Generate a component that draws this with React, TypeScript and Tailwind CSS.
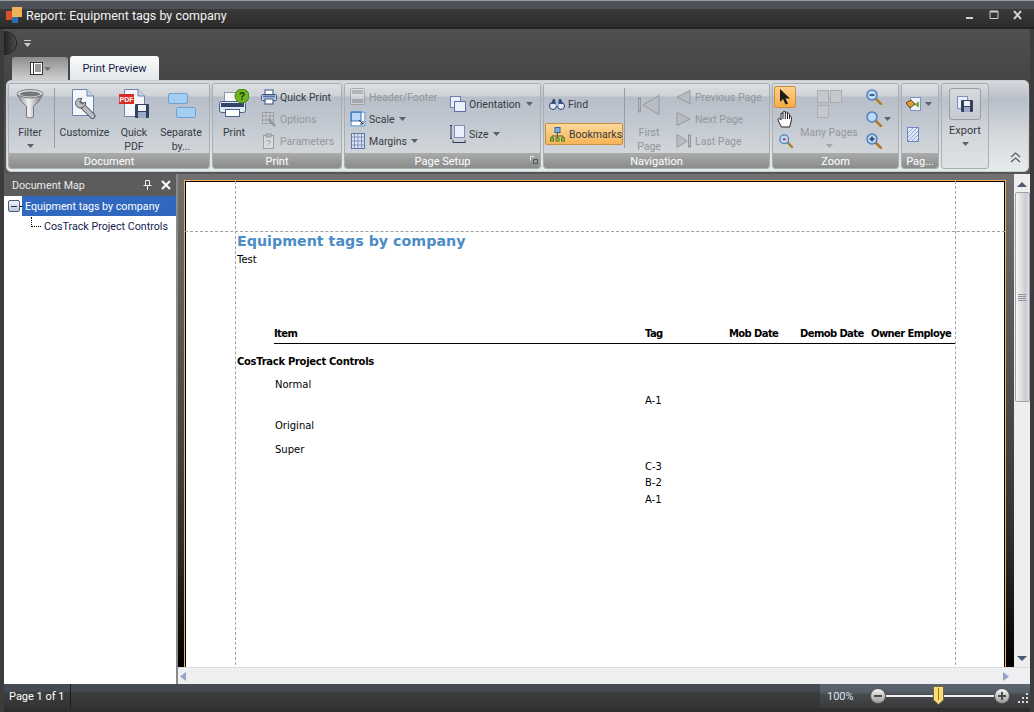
import React from "react";

const ui = "font-['Roboto','Noto_Sans',sans-serif]";
const dim = "text-[#94979b]";
const dark = "text-[#363b42]";

const Arrow = ({ color = "#5c6068" }: { color?: string }) => (
  <svg width="7" height="4" viewBox="0 0 7 4" className="shrink-0">
    <path d="M0 0h7L3.5 4z" fill={color} />
  </svg>
);

const Funnel = () => (
  <svg width="28" height="30" viewBox="0 0 28 30">
    <defs>
      <linearGradient id="fn" x1="0" x2="1" y1="0" y2="0">
        <stop offset="0" stopColor="#8d8f92" />
        <stop offset="0.45" stopColor="#f2f2f2" />
        <stop offset="1" stopColor="#77797c" />
      </linearGradient>
    </defs>
    <ellipse cx="14" cy="5" rx="13" ry="4.5" fill="#d8dadc" stroke="#7f8184" />
    <ellipse cx="14" cy="5" rx="10" ry="2.5" fill="#74777a" />
    <path d="M1.5 6Q5 14 10.5 17V28Q14 30 17.500 28V17Q23 14 26.500 6Q14 12 1.500 6Z" fill="url(#fn)" stroke="#77797c" />
  </svg>
);

const Doc = ({ x = 0, y = 0, w = 20, h = 27 }: { x?: number; y?: number; w?: number; h?: number }) => (
  <g transform={`translate(${x} ${y})`}>
    <path d={`M.5 .5H${w - 7}L${w - 0.5} 7V${h - 0.5}H.5Z`} fill="#f3f6fb" stroke="#6e82ac" />
    <path d={`M${w - 7} .5V7H${w - 0.5}`} fill="#c9d4e8" stroke="#6e82ac" />
  </g>
);

const Customize = () => (
  <svg width="25" height="30" viewBox="0 0 25 30">
    <Doc w={22} h={27} />
    <path d="M9 15.500L20.500 27" stroke="#50545a" strokeWidth="6" strokeLinecap="round" />
    <path d="M9 15.500L20.500 27" stroke="#b9bcc2" strokeWidth="4" strokeLinecap="round" />
    <path d="M10 9.500a5 5 0 0 0-6.500 4c-.3 3 2 6 5.500 5.500 3-.5 5-3 4.500-6l-3 2-3-2z" fill="#b9bcc2" stroke="#50545a" />
  </svg>
);

const Floppy = ({ x, y, s = 13 }: { x: number; y: number; s?: number }) => (
  <g transform={`translate(${x} ${y})`}>
    <rect width={s} height={s} rx="1" fill="#32415f" />
    <rect x="3" y="1" width={s - 6} height={s / 2 - 1} fill="#eef1f6" />
    <rect x="3" y={s / 2 + 1} width={s - 6} height={s / 2 - 1} fill="#9aa9c4" />
  </g>
);

const QuickPdf = () => (
  <svg width="30" height="31" viewBox="0 0 30 31">
    <Doc x={5} w={21} h={28} />
    <rect x="0" y="5" width="15" height="10" fill="#d82a22" />
    <text x="7.500" y="12.500" textAnchor="middle" fontSize="7" fontWeight="700" fill="#fff" fontFamily="'Liberation Sans',sans-serif">PDF</text>
    <Floppy x={16} y={15} s={14} />
  </svg>
);

const Separate = () => (
  <svg width="28" height="26" viewBox="0 0 28 26" className="mt-[4px] ml-[2px]">
    <rect x=".5" y=".5" width="19" height="10" rx="1.500" fill="#a5cdf0" stroke="#6ba3d4" />
    <rect x="8.500" y="14.500" width="19" height="10" rx="1.500" fill="#a5cdf0" stroke="#6ba3d4" />
  </svg>
);

const Printer = ({ size = 16 }: { size?: number }) => (
  <svg width={size} height={size} viewBox="0 0 16 16">
    <rect x="4" y="1" width="8" height="5" fill="#fff" stroke="#39517e" />
    <rect x=".5" y="5.500" width="15" height="6" rx="1" fill="#c8d6ec" stroke="#39517e" />
    <rect x="2" y="6.500" width="12" height="2" fill="#5b75a5" />
    <rect x="4" y="10" width="8" height="5" fill="#fff" stroke="#39517e" />
  </svg>
);

const PrintBig = () => (
  <svg width="30" height="30" viewBox="0 0 30 30">
    <rect x="5.500" y="3.500" width="17" height="10" fill="#f8f8f8" stroke="#8f98a8" />
    <rect x=".5" y="12.500" width="26" height="11" rx="2" fill="#dfe7f2" stroke="#47608c" />
    <rect x="2" y="14" width="23" height="4" fill="#33446a" />
    <rect x="6.500" y="20.500" width="14" height="7" fill="#fff" stroke="#47608c" />
    <circle cx="23" cy="7" r="7" fill="#6db521" stroke="#44800f" />
    <text x="23" y="10.500" textAnchor="middle" fontSize="10" fontWeight="700" fill="#16380a" fontFamily="'Liberation Sans',sans-serif">?</text>
  </svg>
);

const OptionsIcon = () => (
  <svg width="16" height="16" viewBox="0 0 16 16" className="opacity-40">
    <rect x="1.500" y="1.500" width="11" height="11" fill="#ddd" stroke="#666" />
    <path d="M1.500 5h11M1.500 9h11M5 1.500v11M9 1.500v11" stroke="#666" />
    <path d="M7 8l7 7" stroke="#555" strokeWidth="2.500" />
  </svg>
);

const ParamsIcon = () => (
  <svg width="16" height="16" viewBox="0 0 16 16" className="opacity-40">
    <rect x="2.500" y="2.500" width="10" height="13" fill="#eee" stroke="#555" />
    <rect x="5" y="1" width="5" height="3" fill="#999" stroke="#555" />
    <text x="7.500" y="13" textAnchor="middle" fontSize="9" fill="#444" fontFamily="'Liberation Sans',sans-serif">?</text>
  </svg>
);

const HeaderFooterIcon = () => (
  <svg width="16" height="18" viewBox="0 0 16 18" className="opacity-45">
    <rect x=".5" y=".5" width="14" height="16" rx="1" fill="#e8e8e8" stroke="#777" />
    <rect x="2" y="2" width="11" height="4" fill="#8d8d8d" />
    <rect x="2" y="11" width="11" height="4" fill="#8d8d8d" />
  </svg>
);

const ScaleIcon = () => (
  <svg width="16" height="16" viewBox="0 0 16 16">
    <rect width="16" height="16" fill="#fff" />
    <rect x="1" y="1" width="10" height="9" fill="#bcd8f3" stroke="#2f70b7" />
    <rect x="1" y="1" width="14" height="14" fill="none" stroke="#2f70b7" />
    <path d="M9 9l4 4M13 10v3h-3" stroke="#27314e" fill="none" />
  </svg>
);

const MarginsIcon = () => (
  <svg width="14" height="16" viewBox="0 0 14 16">
    <rect x=".5" y=".5" width="13" height="15" fill="#dde5f3" stroke="#5f72a8" />
    <path d="M3.500 .5v15M10.500 .5v15M.5 4h13M.5 12h13M7 .5v15M.5 8h13" stroke="#7e8fbd" />
  </svg>
);

const OrientationIcon = () => (
  <svg width="16" height="16" viewBox="0 0 16 16">
    <rect x=".5" y=".5" width="10" height="11" fill="#e9eef8" stroke="#6e7fb3" />
    <rect x="4.500" y="5.500" width="11" height="10" fill="#e9f0fb" stroke="#5d70aa" />
  </svg>
);

const SizeIcon = () => (
  <svg width="16" height="18" viewBox="0 0 16 18">
    <path d="M1 0v13M0 .5h2M0 13.500h2M3 17.500h12M3 15v4M15 15v4" stroke="#303a58" fill="none" />
    <rect x="4.500" y=".5" width="10" height="12" fill="#e9f0fb" stroke="#7d8fbd" />
  </svg>
);

const Binoculars = () => (
  <svg width="16" height="12" viewBox="0 0 16 12">
    <circle cx="4" cy="8" r="3.500" fill="#dfe9f7" stroke="#273c68" />
    <circle cx="12" cy="8" r="3.500" fill="#dfe9f7" stroke="#273c68" />
    <path d="M2 6l2-5h2l1 5zM14 6l-2-5h-2L9 6z" fill="#38507f" />
    <rect x="6.500" y="5" width="3" height="3" fill="#a9b8d2" />
  </svg>
);

const BookmarksIcon = () => (
  <svg width="15" height="15" viewBox="0 0 15 15">
    <rect x="5" y="0.500" width="5" height="5" fill="#7fb2e5" stroke="#2f63a3" />
    <path d="M7.500 6v3M2 11V9h11v2M7.500 9v2" stroke="#44642a" fill="none" />
    <rect x=".5" y="11" width="3" height="3" fill="#a6cf5d" stroke="#4f7a20" />
    <rect x="6" y="11" width="3" height="3" fill="#a6cf5d" stroke="#4f7a20" />
    <rect x="11.500" y="11" width="3" height="3" fill="#a6cf5d" stroke="#4f7a20" />
  </svg>
);

const tri = { fill: "#b9bcc1", stroke: "#95989d" };

const FirstBig = () => (
  <svg width="22" height="20" viewBox="0 0 22 20">
    <rect x=".5" y="3" width="2" height="14" {...tri} />
    <path d="M21 .5V19.500L5 10z" {...tri} />
  </svg>
);
const PrevSmall = () => (
  <svg width="15" height="14" viewBox="0 0 15 14"><path d="M14 .5v13L1 7z" {...tri} /></svg>
);
const NextSmall = () => (
  <svg width="15" height="14" viewBox="0 0 15 14"><path d="M1 .5v13L14 7z" {...tri} /></svg>
);
const LastSmall = () => (
  <svg width="15" height="14" viewBox="0 0 15 14">
    <path d="M1 .5v13L11 7z" {...tri} />
    <rect x="12.500" y="1" width="2" height="12" {...tri} />
  </svg>
);

const Pointer = () => (
  <svg width="12" height="16" viewBox="0 0 12 16"><path d="M1 0v13l3-3 2.500 5.500 2.500-1L6.500 9.500H11z" fill="#1c1c1c" /></svg>
);

const Hand = () => (
  <svg width="18" height="18" viewBox="0 0 18 18">
    <path d="M4.500 17C3 14 1 11 1 9.500S3 8.500 4 10V4c0-1.500 2-1.500 2 0V2.500c0-1.500 2.300-1.500 2.300 0V3c0-1.500 2.200-1.500 2.200 0v1.500c0-1.500 2.100-1.500 2.100 0V7c0-1 2-1 2 .5 0 3-1 6-2 9.500z" fill="#fff" stroke="#222" />
    <path d="M6 4v5M8.300 3v6M10.500 4v5M12.600 6v3" stroke="#222" />
  </svg>
);

const Lens = ({ mark, size = 16, red }: { mark?: "minus" | "plus"; size?: number; red?: boolean }) => (
  <svg width={size} height={size} viewBox="0 0 16 16">
    <path d="M9.500 9.500L15 15" stroke="#b07a28" strokeWidth="2.500" strokeLinecap="round" />
    <circle cx="6" cy="6" r="5" fill="#bcd9f5" stroke="#4f7fb8" strokeWidth="1.500" />
    {mark === "minus" && <path d="M3.500 6h5" stroke="#24365e" strokeWidth="1.500" />}
    {mark === "plus" && <path d="M3.500 6h5M6 3.500v5" stroke="#24365e" strokeWidth="1.500" />}
    {red && <circle cx="6" cy="6" r="1.500" fill="#c8423c" />}
  </svg>
);

const BucketIcon = () => (
  <svg width="16" height="15" viewBox="0 0 16 15">
    <rect x="5.500" y=".5" width="10" height="13" fill="#eef3fb" stroke="#7f92c0" />
    <path d="M9 7.500l5-3v6z" fill="#6fae2b" />
    <path d="M1 6l5-3 4 4-5 4z" fill="#d99a3c" stroke="#6b4315" />
  </svg>
);

const WatermarkIcon = () => (
  <svg width="12" height="15" viewBox="0 0 12 15">
    <rect x=".5" y=".5" width="11" height="14" fill="#dfe8f8" stroke="#6e86c2" />
    <path d="M1 6L6 1M1 10l9-9M1 14L11 4M5 14l6-6M9 14l2-2" stroke="#8ba4dd" />
  </svg>
);

const ExportIcon = () => (
  <svg width="16" height="16" viewBox="0 0 16 16">
    <rect x=".5" y=".5" width="10" height="12" fill="#eaf0fb" stroke="#7d90c0" />
    <Floppy x={4} y={4} s={12} />
  </svg>
);

const Group = ({ caption, w, children, launcher }: { caption: string; w: string; children: React.ReactNode; launcher?: boolean }) => (
  <div className={`${w} h-[86px] shrink-0 flex flex-col rounded-[3px] border border-[#a9aeb3] overflow-hidden`}>
    <div className="flex-1 flex bg-[linear-gradient(180deg,#dcdfe2_0%,#ced3d8_17%,#b7bec9_19%,#c3c9d1_60%,#d2d6da_100%)]">{children}</div>
    <div className="h-[15px] pt-[2px] flex items-center justify-center relative bg-[linear-gradient(180deg,#aaacac,#8a8c8c)] text-white text-[11px] leading-none">
      {caption}
      {launcher && (
        <svg width="8" height="8" viewBox="0 0 8 8" className="absolute right-[2px] top-[3px]" fill="none" stroke="#e8e8e8">
          <path d="M4.500 .5H.5v4" />
          <path d="M3.500 3.500h4v4h-4z" stroke="#555" />
        </svg>
      )}
    </div>
  </div>
);

const LargeBtn = ({ w, icon, lines, arrow, disabled }: { w: string; icon: React.ReactNode; lines: string[]; arrow?: boolean; disabled?: boolean }) => (
  <div className={`${w} shrink-0 flex flex-col items-center pt-[5px] ${disabled ? dim : dark}`}>
    <div className="h-[36px] flex items-start justify-center">{icon}</div>
    {lines.map((l) => (
      <div key={l} className="h-[14px] leading-[16px] whitespace-nowrap">{l}</div>
    ))}
    {arrow && <div className="h-[14px] flex items-center"><Arrow color={disabled ? "#a3a6aa" : "#5c6068"} /></div>}
  </div>
);

const SmallBtn = ({ icon, label, arrow, disabled, h = "h-[22px]", iconW = "w-[19px]", arrowGap = "ml-[5px]" }: { icon: React.ReactNode; label?: string; arrow?: boolean; disabled?: boolean; h?: string; iconW?: string; arrowGap?: string }) => (
  <div className={`${h} flex items-center whitespace-nowrap ${disabled ? dim : dark}`}>
    <span className={`${iconW} shrink-0 flex justify-center`}>{icon}</span>
    {label && <span className="ml-[2px] pt-[2px]">{label}</span>}
    {arrow && <span className={arrowGap}><Arrow /></span>}
  </div>
);

const Divider = ({ ml }: { ml: string }) => <div className={`${ml} w-px h-[60px] mt-[4px] bg-[#989da4] shrink-0`} />;

const Ribbon = () => (
  <div className="ml-[4px] mr-[1px] h-[92px] rounded-[5px] border border-[#c9cdd1] bg-[linear-gradient(180deg,#d6d9dd_0%,#b8bec8_20%,#d4d9dc_60%,#e6ebec_100%)] pt-[2px] pl-[1px] flex gap-[2px] text-[10.500px] relative">
    <Group caption="Document" w="w-[202px]">
      <LargeBtn w="w-[42px]" icon={<Funnel />} lines={["Filter"]} arrow />
      <Divider ml="ml-[3px]" />
      <LargeBtn w="w-[59px]" icon={<Customize />} lines={["Customize"]} />
      <LargeBtn w="w-[40px]" icon={<QuickPdf />} lines={["Quick", "PDF"]} />
      <LargeBtn w="w-[54px]" icon={<Separate />} lines={["Separate", "by..."]} />
    </Group>
    <Group caption="Print" w="w-[130px]">
      <LargeBtn w="w-[42px]" icon={<PrintBig />} lines={["Print"]} />
      <div className="pt-[2px] pl-[4px]">
        <SmallBtn icon={<Printer />} label="Quick Print" />
        <SmallBtn icon={<OptionsIcon />} label="Options" disabled />
        <SmallBtn icon={<ParamsIcon />} label="Parameters" disabled />
      </div>
    </Group>
    <Group caption="Page Setup" w="w-[197px]" launcher>
      <div className="pt-[2px] pl-[3px] w-[103px]">
        <SmallBtn icon={<HeaderFooterIcon />} label="Header/Footer" disabled />
        <SmallBtn icon={<ScaleIcon />} label="Scale" arrow arrowGap="ml-[4px]" />
        <SmallBtn icon={<MarginsIcon />} label="Margins" arrow arrowGap="ml-[4px]" />
      </div>
      <div className="pt-[5px]">
        <SmallBtn icon={<OrientationIcon />} label="Orientation" arrow h="h-[30px]" />
        <SmallBtn icon={<SizeIcon />} label="Size" arrow h="h-[30px]" />
      </div>
    </Group>
    <Group caption="Navigation" w="w-[227px]">
      <div className="pt-[9px] pl-[1px] w-[80px]">
        <div className="h-[30px] pl-[2px]"><SmallBtn icon={<Binoculars />} label="Find" h="h-[22px]" /></div>
        <div className="h-[22px] w-[78px] rounded-[2px] border border-[#c98f3f] bg-[linear-gradient(180deg,#fdd99a,#f8b457)] pl-[2px]">
          <SmallBtn icon={<BookmarksIcon />} label="Bookmarks" h="h-[20px]" />
        </div>
      </div>
      <Divider ml="ml-[0px]" />
      <LargeBtn w="w-[48px]" icon={<div className="pt-[6px]"><FirstBig /></div>} lines={["First", "Page"]} disabled />
      <div className="pt-[2px] pl-[1px]">
        <SmallBtn icon={<PrevSmall />} label="Previous Page" disabled />
        <SmallBtn icon={<NextSmall />} label="Next  Page" disabled />
        <SmallBtn icon={<LastSmall />} label="Last  Page" disabled />
      </div>
    </Group>
    <Group caption="Zoom" w="w-[127px]">
      <div className="pt-[2px] pl-[1px] w-[24px]">
        <div className="h-[22px] w-[22px] rounded-[2px] border border-[#c98f3f] bg-[linear-gradient(180deg,#fdd18b,#f7ab48)] flex items-center justify-center"><Pointer /></div>
        <div className="h-[22px] flex items-center justify-center"><Hand /></div>
        <div className="h-[22px] flex items-center justify-center"><Lens size={14} red /></div>
      </div>
      <LargeBtn
        w="w-[64px]"
        disabled
        icon={
          <div className="grid grid-cols-[12px_12px] gap-[1px] pt-[1px]">
            <span className="h-[13px] bg-[#c6c8cb] border border-[#aaadb1]" />
            <span className="h-[13px] bg-[#c6c8cb] border border-[#aaadb1]" />
            <span className="h-[13px] bg-[#c6c8cb] border border-[#aaadb1] mt-px" />
          </div>
        }
        lines={["Many Pages"]}
        arrow
      />
      <div className="pt-[2px] pl-[3px]">
        <SmallBtn icon={<Lens mark="minus" />} />
        <SmallBtn icon={<Lens />} arrow arrowGap="ml-[1px]" />
        <SmallBtn icon={<Lens mark="plus" />} />
      </div>
    </Group>
    <Group caption="Pag..." w="w-[38px]">
      <div className="pl-[2px]">
        <div className="pt-[9px]"><SmallBtn icon={<BucketIcon />} arrow iconW="w-[18px]" h="h-[22px]" arrowGap="ml-[3px]" /></div>
        <div className="pt-[8px]"><SmallBtn icon={<WatermarkIcon />} iconW="w-[18px]" h="h-[22px]" /></div>
      </div>
    </Group>
    <div className="w-[48px] h-[86px] shrink-0 rounded-[3px] border border-[#a9aeb3] flex flex-col items-center pt-[4px] bg-[linear-gradient(180deg,#d8dbde_0%,#c4c9cf_15%,#bbc1ca_20%,#d3d7db_60%,#dfe3e5_100%)]">
      <div className="w-[32px] h-[32px] rounded-[3px] border border-[#989da3] bg-[linear-gradient(180deg,#d5d8dc,#c6cbd1)] flex items-center justify-center"><ExportIcon /></div>
      <div className={`${dark} text-[11px] leading-[14px] mt-[4px]`}>Export</div>
      <div className="h-[12px] flex items-center"><Arrow /></div>
    </div>
    <div className="absolute right-[7px] bottom-[8px] text-[#5a5e63]">
      <svg width="11" height="11" viewBox="0 0 11 11" fill="none" stroke="currentColor">
        <path d="M1 5l4.500-4L10 5M1 10l4.500-4L10 10" strokeWidth="1.300" />
      </svg>
    </div>
  </div>
);

const cellH = "flex items-center";
const reportFont = "font-['DejaVu_Sans',sans-serif] text-[10px] text-black";

const Page = () => (
  <div className="ml-[6px] mt-[6px] w-[822px] h-[520px] shrink-0 border border-b-0 border-[#f7ac5e] relative overflow-hidden">
    <div className={`w-full h-full border border-b-0 border-black bg-white pt-[49px] pl-[51px] ${reportFont}`}>
      <div className="h-[20px] leading-[20px] text-[#4a8cc6] font-bold text-[14.250px]">Equipment tags by company</div>
      <div className="h-[16px] leading-[16px] mt-[1px]">Test</div>
      <div className="mt-[58px] h-[16px] ml-[37px] w-[681px] flex font-bold whitespace-nowrap leading-[16px] tracking-[-0.6px]">
        <div className="w-[371px]">Item</div>
        <div className="w-[84px]">Tag</div>
        <div className="w-[71px]">Mob Date</div>
        <div className="w-[71px]">Demob Date</div>
        <div>Owner Employe</div>
      </div>
      <div className="ml-[37px] w-[681px] h-px bg-black mt-[1px]" />
      <div className={`${cellH} h-[16px] mt-[9px] font-bold tracking-[-0.3px]`}>CosTrack Project Controls</div>
      <div className={`${cellH} h-[16px] mt-[7px] ml-[38px]`}>Normal</div>
      <div className={`${cellH} h-[16px] ml-[408px]`}>A-1</div>
      <div className={`${cellH} h-[16px] mt-[9px] ml-[38px]`}>Original</div>
      <div className={`${cellH} h-[16px] mt-[8px] ml-[38px]`}>Super</div>
      <div className={`${cellH} h-[16px] mt-[1px] ml-[408px]`}>C-3</div>
      <div className={`${cellH} h-[16px] ml-[408px]`}>B-2</div>
      <div className={`${cellH} h-[16px] mt-[1px] ml-[408px]`}>A-1</div>
    </div>
    <div className="absolute left-[50px] top-0 bottom-0 border-l border-dashed border-[#a0a0a0]" />
    <div className="absolute left-[770px] top-0 bottom-0 border-l border-dashed border-[#a0a0a0]" />
    <div className="absolute left-0 right-0 top-[50px] border-t border-dashed border-[#a0a0a0]" />
  </div>
);

const VScroll = () => (
  <div className="w-[16px] shrink-0 bg-[#eeeeef] flex flex-col items-center">
    <div className="h-[18px] flex items-end pb-[5px]">
      <svg width="10" height="5" viewBox="0 0 10 5"><path d="M5 0L10 5H0z" fill="#4c5678" /></svg>
    </div>
    <div className="w-[15px] h-[210px] rounded-[2px] border border-[#a0a4aa] bg-[linear-gradient(90deg,#f4f4f5_0%,#d9dbde_50%,#c8cbd0_75%,#dfe1e3_100%)] flex items-center justify-center">
      <div className="w-[8px] h-[7px] bg-[repeating-linear-gradient(180deg,#8e9197_0,#8e9197_1px,transparent_1px,transparent_2px)]" />
    </div>
    <div className="flex-1" />
    <div className="h-[14px] flex items-start pt-[3px]">
      <svg width="10" height="5" viewBox="0 0 10 5"><path d="M5 5L10 0H0z" fill="#4c5678" /></svg>
    </div>
  </div>
);

const DocumentMap = () => (
  <div className="w-[172px] shrink-0 flex flex-col">
    <div className="h-[22px] bg-[#5c5c5c] text-[#e8e8e8] text-[10.700px] flex items-center pl-[8px] pr-[5px]">
      <span className="flex-1 pt-[2px]">Document Map</span>
      <svg width="9" height="10" viewBox="0 0 9 10" className="mr-[9px]" fill="none" stroke="#eee">
        <path d="M2.500 .5h4v5h-4zM.5 5.500h8M4.500 6v4" />
      </svg>
      <svg width="10" height="10" viewBox="0 0 10 10" stroke="#fff" strokeWidth="2"><path d="M1 1l8 8M9 1L1 9" /></svg>
    </div>
    <div className="flex-1 bg-white text-[10.700px] text-[#13224e]">
      <div className="h-[20px] flex items-center pl-[4px]">
        <span className="w-[12px] h-[12px] rounded-[2px] border border-[#4f5b7c] bg-[linear-gradient(180deg,#f1f4fa,#bcc6dc)] flex items-center justify-center shrink-0">
          <span className="w-[6px] h-px bg-[#26335a]" />
        </span>
        <span className="w-[2px] border-t border-dotted border-black" />
        <span className="flex-1 h-full bg-[#3068c0] text-white flex items-center pl-[3px] pt-[2px]">Equipment tags by company</span>
      </div>
      <div className="h-[20px] flex items-center pl-[27px]">
        <span className="w-[10px] h-[10px] mb-[9px] border-l border-b border-dotted border-black shrink-0" />
        <span className="ml-[3px] pt-[2px] whitespace-nowrap">CosTrack Project Controls</span>
      </div>
    </div>
  </div>
);

const StatusBar = () => (
  <div className="h-[24px] flex bg-[linear-gradient(180deg,#474b54_0%,#454952_30%,#3c3d3e_35%,#333_100%)] text-[11px] text-white">
    <div className="w-[67px] pl-[5px] pt-[2px] flex items-center border-r border-[#1c1c1c]">Page 1 of 1</div>
    <div className="flex-1" />
    <div className="w-[210px] bg-[linear-gradient(180deg,#5e6671_0%,#555c66_35%,#47494c_45%,#383a3c_100%)] flex items-center pl-[7px] text-[#dfe7f0]">
      <span className="w-[43px] pt-[2px]">100%</span>
      <div className="w-[16px] h-[16px] rounded-full border border-[#565656] bg-[linear-gradient(180deg,#f5f5f5,#9a9a9a)] flex items-center justify-center shrink-0">
        <span className="w-[8px] h-[2px] bg-[#4c4c4c]" />
      </div>
      <div className="w-[108px] h-[2px] bg-[#eeeeee] relative shrink-0">
        <svg width="11" height="19" viewBox="0 0 11 19" className="absolute left-[47px] -top-[9px]">
          <path d="M.5 .5h10V14l-5 4.500-5-4.500z" fill="#fbdc72" stroke="#6e6650" />
          <path d="M5.500 2v12" stroke="#8c7a35" />
        </svg>
      </div>
      <div className="w-[16px] h-[16px] rounded-full border border-[#565656] bg-[linear-gradient(180deg,#f5f5f5,#9a9a9a)] flex items-center justify-center shrink-0 relative">
        <span className="w-[8px] h-[2px] bg-[#4c4c4c]" />
        <span className="absolute w-[2px] h-[8px] bg-[#4c4c4c]" />
      </div>
      <svg width="11" height="11" viewBox="0 0 11 11" className="ml-[8px] mt-[5px]" fill="#d8d8d8">
        <rect x="8" y="0" width="2" height="2" />
        <rect x="4" y="4" width="2" height="2" />
        <rect x="8" y="4" width="2" height="2" />
        <rect x="0" y="8" width="2" height="2" />
        <rect x="4" y="8" width="2" height="2" />
        <rect x="8" y="8" width="2" height="2" />
      </svg>
    </div>
  </div>
);

export default function App() {
  return (
    <div className={`w-[1034px] h-[712px] flex flex-col overflow-hidden bg-[#3a3a3a] ${ui}`}>
      <div className="h-[29px] shrink-0 flex items-center border-t border-[#9a9a9a] border-b-2 border-b-[#222] bg-[linear-gradient(180deg,#4e535b_0%,#4c5159_30%,#3a3a3a_32%,#2c2c2c_100%)] pl-[6px] pr-[8px] pt-[2px] text-white text-[12.500px]">
        <svg width="17" height="17" viewBox="0 0 17 17" className="shrink-0">
          <rect x="0" y="4" width="7" height="9" fill="#d8512b" />
          <rect x="6" y="0" width="10" height="10" fill="#f0b35c" />
          <rect x="6" y="10" width="6" height="6" fill="#2e6fb3" />
        </svg>
        <span className="ml-[3px] pt-[2px] flex-1 text-[#f2f2f2]">Report: Equipment tags by company</span>
        <svg width="60" height="12" viewBox="0 0 60 12" fill="none" stroke="#cfcfcf">
          <path d="M0 9h7" strokeWidth="2" />
          <path d="M24 2.500h8v7h-8z" />
          <path d="M24 2.500h8" strokeWidth="2" />
          <path d="M48 2l7 8M55 2l-7 8" strokeWidth="2" />
        </svg>
      </div>
      <div className="flex-1 min-h-0 flex flex-col bg-[linear-gradient(180deg,#505050_0px,#454545_50px,#555_100px,#555_100%)] border-x-[4px] border-[#3c3c3c]">
        <div className="h-[28px] shrink-0 flex items-center">
          <span className="w-[13px] h-[24px] rounded-r-[12px] bg-[linear-gradient(90deg,#222,#4a4a4a)] border-r border-[#222]" />
          <svg width="7" height="7" viewBox="0 0 7 7" className="ml-[7px]" fill="#ccc">
            <rect y="0" width="7" height="1" />
            <path d="M0 3h7L3.500 7z" />
          </svg>
        </div>
        <div className="h-[23px] shrink-0 flex items-end pl-[8px] gap-[2px] text-[11px]">
          <div className="w-[56px] h-[23px] rounded-t-[3px] bg-[linear-gradient(180deg,#8d8e90,#cfd0d2)] flex items-center justify-center gap-[1px]">
            <svg width="13" height="13" viewBox="0 0 13 13" fill="#fff" stroke="#333">
              <rect x=".5" y=".5" width="12" height="12" />
              <path d="M3.500 .5v12M5 3h6M5 5h6M5 7h6M5 9h6" />
            </svg>
            <Arrow color="#707070" />
          </div>
          <div className="w-[89px] h-[24px] pt-[3px] rounded-t-[3px] bg-[linear-gradient(180deg,#fbfcfc,#e2e7ea)] flex items-center justify-center text-[#16234a]">Print Preview</div>
        </div>
        <div className="-ml-[2px]"><Ribbon /></div>
        <div className="flex-1 min-h-0 flex mt-[2px]">
          <DocumentMap />
          <div className="w-[2px] bg-[#8a8a8a]" />
          <div className="flex-1 min-w-0 flex flex-col">
            <div className="flex-1 min-h-0 flex">
              <div className="flex-1 min-w-0 overflow-hidden bg-[linear-gradient(180deg,#717171_0%,#595959_30%,#444_55%,#2e2e2e_75%,#000_100%)]">
                <Page />
              </div>
              <VScroll />
            </div>
            <div className="h-[17px] shrink-0 bg-[#eeeff1] border-t border-[#dcdcdc] flex items-center justify-between pl-[2px] pr-[21px]">
              <svg width="6" height="9" viewBox="0 0 6 9"><path d="M6 0v9L0 4.500z" fill="#95a3c6" /></svg>
              <svg width="6" height="9" viewBox="0 0 6 9"><path d="M0 0v9l6-4.500z" fill="#95a3c6" /></svg>
            </div>
          </div>
        </div>
        <div className="shrink-0"><StatusBar /></div>
        <div className="h-[4px] shrink-0 bg-[#2e2e2e]" />
      </div>
    </div>
  );
}
